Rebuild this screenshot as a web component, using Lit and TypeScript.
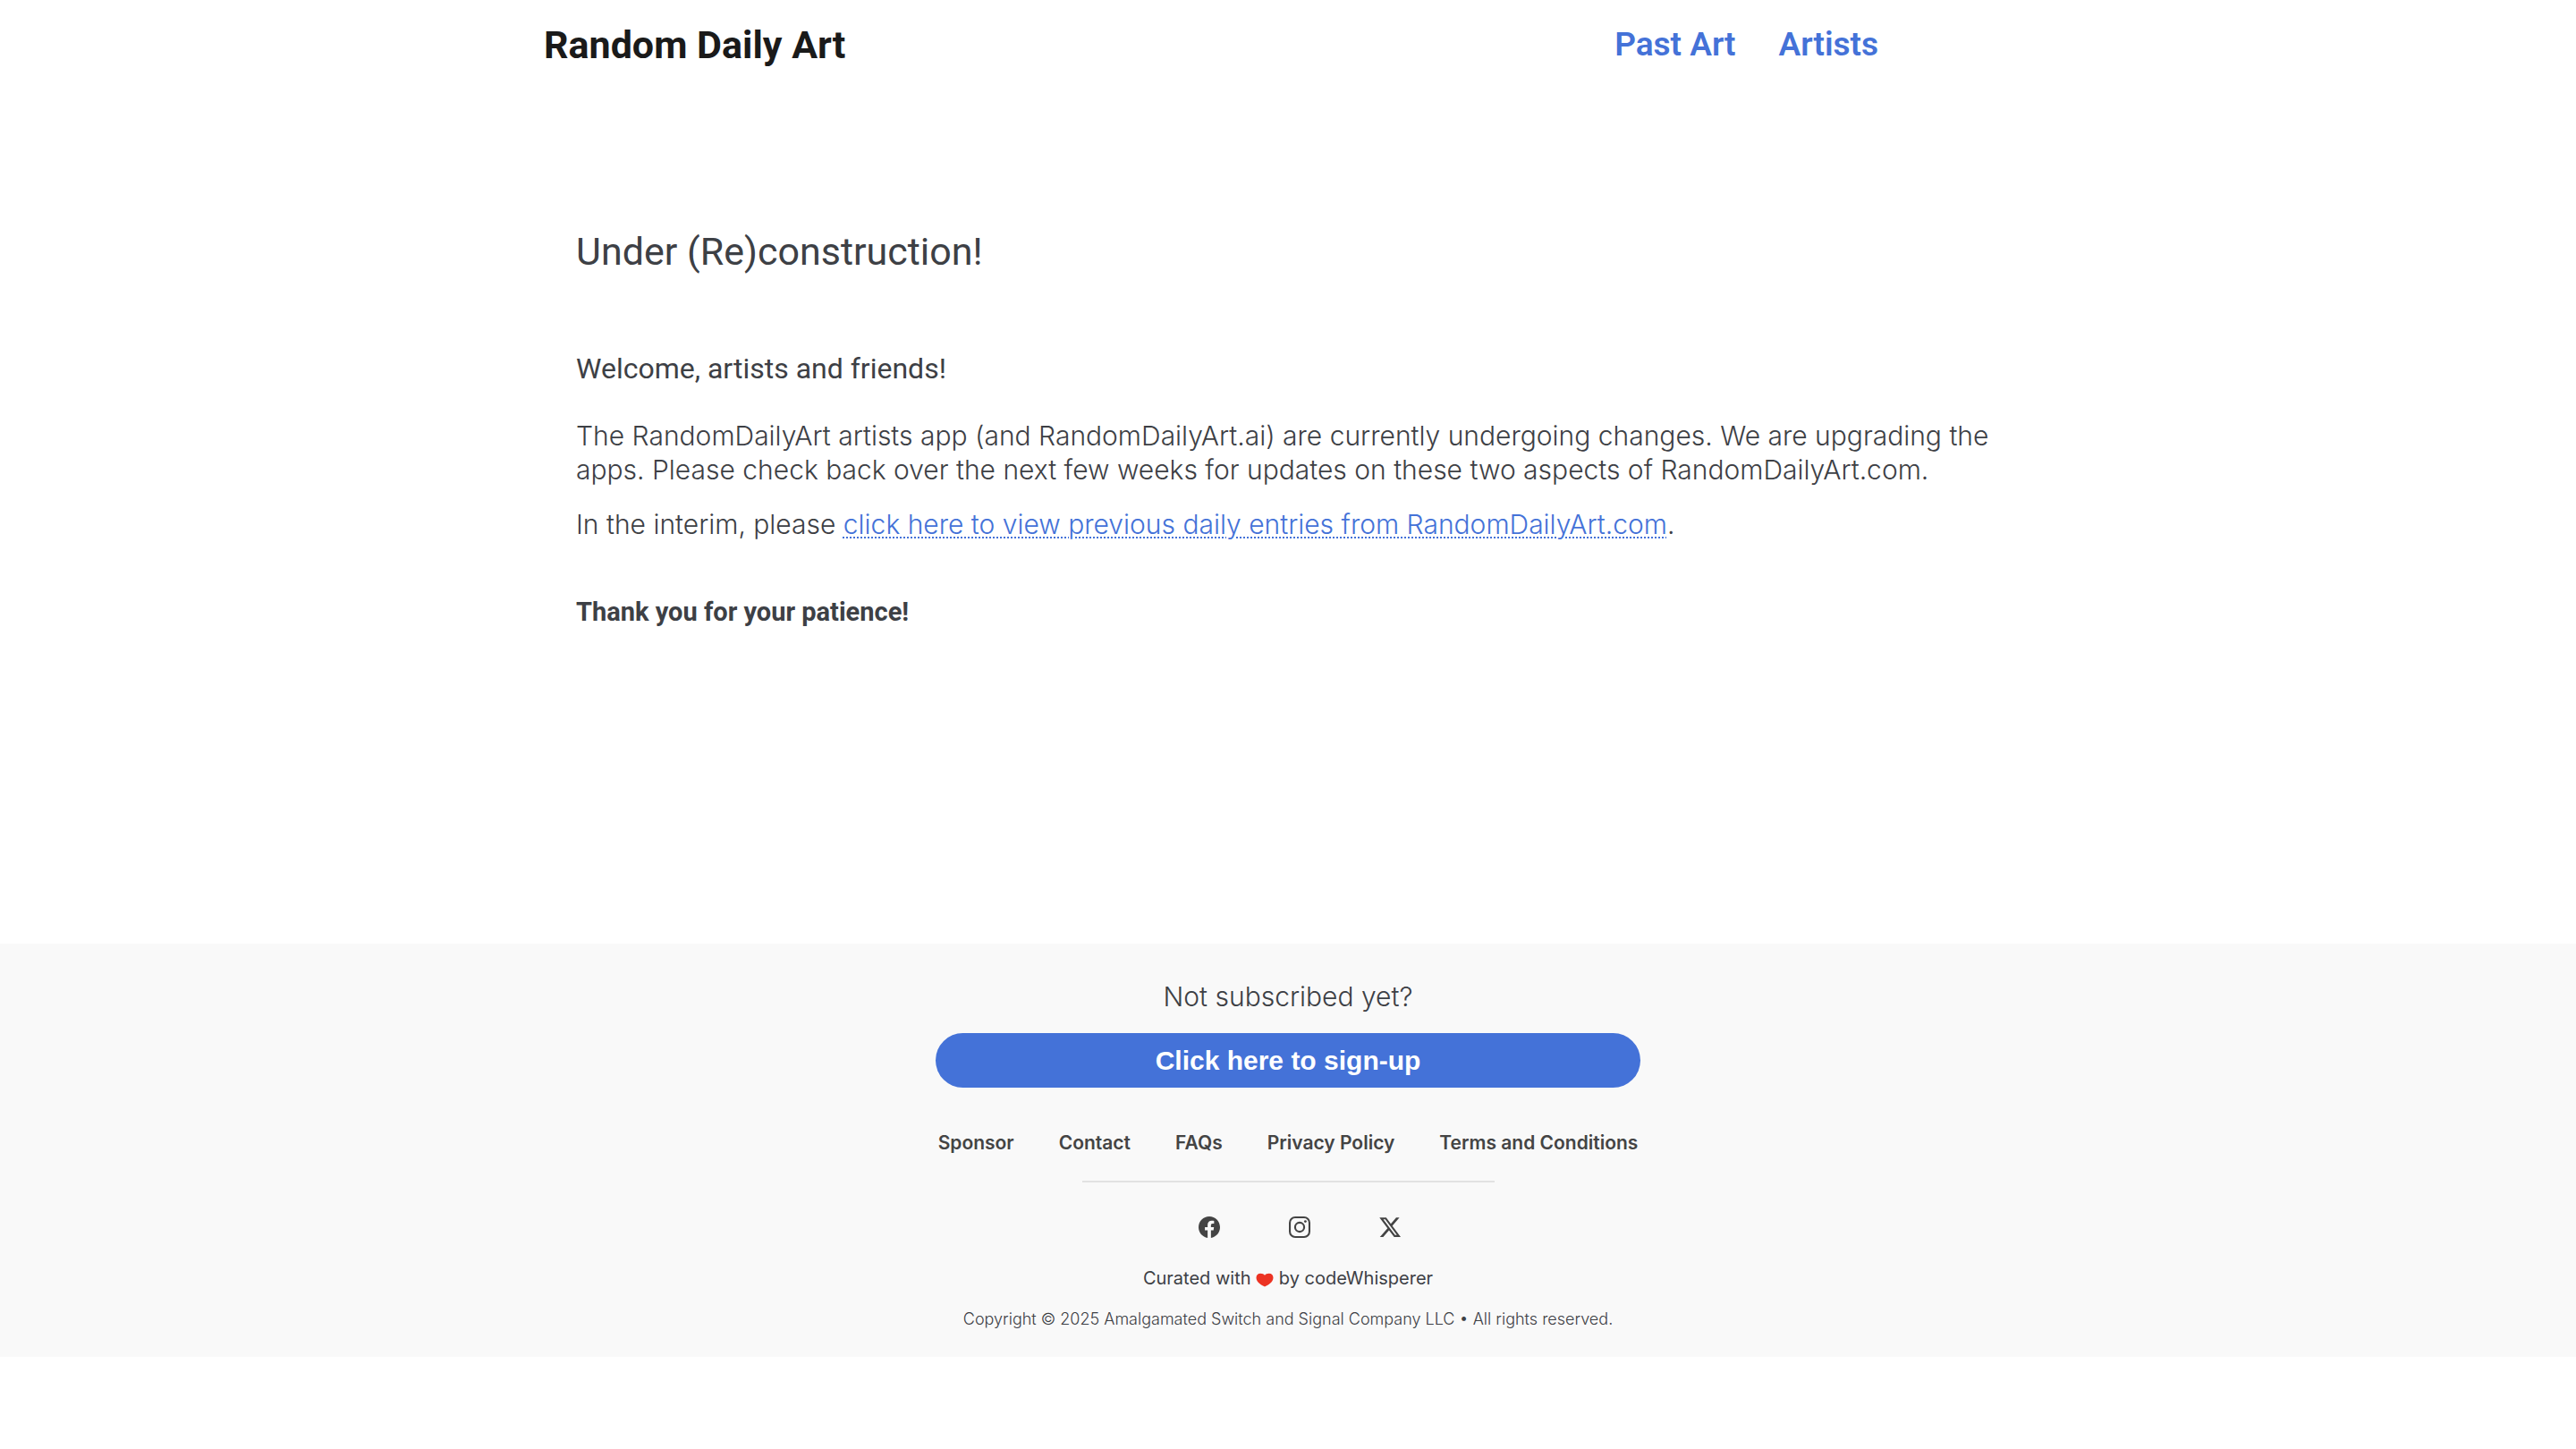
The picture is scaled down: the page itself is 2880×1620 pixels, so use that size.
import { LitElement, html, css, svg } from "lit";
import { customElement } from "lit/decorators.js";

const facebook = svg`<path d="M24 12.07C24 5.41 18.63 0 12 0S0 5.41 0 12.07C0 18.1 4.39 23.1 10.13 24v-8.44H7.08v-3.49h3.05V9.41c0-3.02 1.79-4.69 4.53-4.69 1.31 0 2.68.24 2.68.24v2.97h-1.51c-1.49 0-1.96.93-1.96 1.89v2.25h3.33l-.53 3.49h-2.8V24C19.61 23.1 24 18.1 24 12.07z"/>`;
const instagram = svg`<path fill-rule="evenodd" d="M7 0h10a7 7 0 0 1 7 7v10a7 7 0 0 1-7 7H7a7 7 0 0 1-7-7V7a7 7 0 0 1 7-7zm0 2.1A4.9 4.9 0 0 0 2.1 7v10A4.9 4.9 0 0 0 7 21.9h10a4.9 4.9 0 0 0 4.9-4.9V7A4.9 4.9 0 0 0 17 2.1zM12 5.84a6.16 6.16 0 1 1 0 12.32 6.16 6.16 0 0 1 0-12.32zM12 8a4 4 0 1 0 0 8 4 4 0 0 0 0-8z"/><circle cx="18.4" cy="5.6" r="1.44"/>`;
const xLogo = svg`<path d="M18.244 1.25h3.308l-7.227 8.26 8.502 11.24H16.17l-5.214-6.817L4.99 20.75H1.68l7.73-8.835L1.254 1.25H8.08l4.713 6.231zm-1.161 17.52h1.833L7.084 3.126H5.117z" transform="translate(-1.1 -0.2) scale(1.1 1.12)"/>`;

@customElement("app-root")
export class AppRoot extends LitElement {
  static styles = css`
    :host {
      display: block;
      min-height: 100vh;
      background: #fff;
      color: #3d4045;
      font-family: Inter, "Liberation Sans", sans-serif;
      font-size: 30px;
      font-weight: 300;
      line-height: 38px;
    }
    a { color: #4472d8; text-decoration: none; }
    h1, h2, h3, p { margin: 0; }
    h1, h2, h3, .header { font-family: Roboto, "Liberation Sans", sans-serif; }
    .header {
      display: flex;
      align-items: center;
      justify-content: space-between;
      box-sizing: border-box;
      max-width: 1664px;
      height: 100px;
      margin: 0 auto;
      padding-right: 172px;
    }
    .brand { color: #1a1a1a; font-size: 43px; font-weight: 700; line-height: 56px; }
    .nav { display: flex; gap: 48px; font-size: 37px; font-weight: 600; line-height: 48px; }
    .main {
      box-sizing: border-box;
      max-width: 1664px;
      margin: 0 auto;
      padding: 151px 16px 353px 36px;
    }
    .title { font-size: 43px; font-weight: 400; line-height: 60px; }
    .welcome { margin-top: 82px; font-size: 32px; font-weight: 400; line-height: 38px; }
    .intro { margin-top: 37px; }
    .interim { margin-top: 23px; }
    .interim a {
      text-decoration: underline dotted 2px;
      text-underline-offset: 3px;
    }
    .thanks { margin-top: 61px; font-size: 29px; font-weight: 700; line-height: 36px; }
    .footer {
      display: flex;
      flex-direction: column;
      align-items: center;
      padding: 40px 24px 29px;
      background: #f9f9f9;
    }
    .signup {
      width: 100%;
      max-width: 788px;
      height: 61px;
      margin-top: 22px;
      border: 0;
      border-radius: 31px;
      background: #4472d8;
      color: #fff;
      font: 700 30px/36px "Liberation Sans", Arial, sans-serif;
      cursor: pointer;
    }
    .links { display: flex; gap: 50px; margin-top: 47px; font-size: 21px; font-weight: 600; line-height: 30px; }
    .links a, .social a { color: #444; }
    .rule { width: 461px; max-width: 100%; height: 2px; margin: 27px 0 0; border: 0; background: #e2e2e2; }
    .social { display: flex; gap: 77px; margin-top: 38px; padding-left: 26px; }
    .social a { display: block; height: 24px; }
    .icon { display: block; width: 24px; height: 24px; fill: currentColor; }
    .curated { margin-top: 30px; font-size: 20px; font-weight: 400; line-height: 30px; }
    .heart { width: 20px; height: 16px; fill: #ec3323; vertical-align: -3px; }
    .copyright { margin-top: 18px; font-size: 18px; font-weight: 300; line-height: 26px; }
  `;

  private links = ["Sponsor", "Contact", "FAQs", "Privacy Policy", "Terms and Conditions"];

  private social = [
    { name: "Facebook", icon: facebook },
    { name: "Instagram", icon: instagram },
    { name: "X", icon: xLogo },
  ];

  render() {
    return html`
      <header class="header">
        <a class="brand" href="#">Random Daily Art</a>
        <nav class="nav">
          <a href="#past">Past Art</a>
          <a href="#artists">Artists</a>
        </nav>
      </header>
      <main class="main">
        <h1 class="title">Under (Re)construction!</h1>
        <h2 class="welcome">Welcome, artists and friends!</h2>
        <p class="intro">
          The RandomDailyArt artists app (and RandomDailyArt.ai) are currently undergoing changes. We are upgrading the
          apps. Please check back over the next few weeks for updates on these two aspects of RandomDailyArt.com.
        </p>
        <p class="interim">In the interim, please <a href="#past">click here to view previous daily entries from RandomDailyArt.com</a>.</p>
        <h3 class="thanks">Thank you for your patience!</h3>
      </main>
      <footer class="footer">
        <p>Not subscribed yet?</p>
        <button class="signup" type="button">Click here to sign-up</button>
        <nav class="links">${this.links.map((text) => html`<a href="#">${text}</a>`)}</nav>
        <hr class="rule" />
        <div class="social">
          ${this.social.map(
            ({ name, icon }) => html`<a href="#" aria-label=${name}><svg class="icon" viewBox="0 0 24 24" aria-hidden="true">${icon}</svg></a>`
          )}
        </div>
        <p class="curated">
          Curated with
          <svg class="heart" viewBox="0 0 20 16" aria-hidden="true"><path d="M10 15.5C6.5 14 .5 10.5.5 5.5.5 2.500 2.500.8 5.200.8 7.500.8 9.200 1.500 10 2.800 10.800 1.500 12.500.8 14.800.8 17.500.8 19.500 2.500 19.500 5.500c0 5-6 8.500-9.500 10z" /></svg>
          by codeWhisperer
        </p>
        <p class="copyright">Copyright © 2025 Amalgamated Switch and Signal Company LLC • All rights reserved.</p>
      </footer>
    `;
  }
}
